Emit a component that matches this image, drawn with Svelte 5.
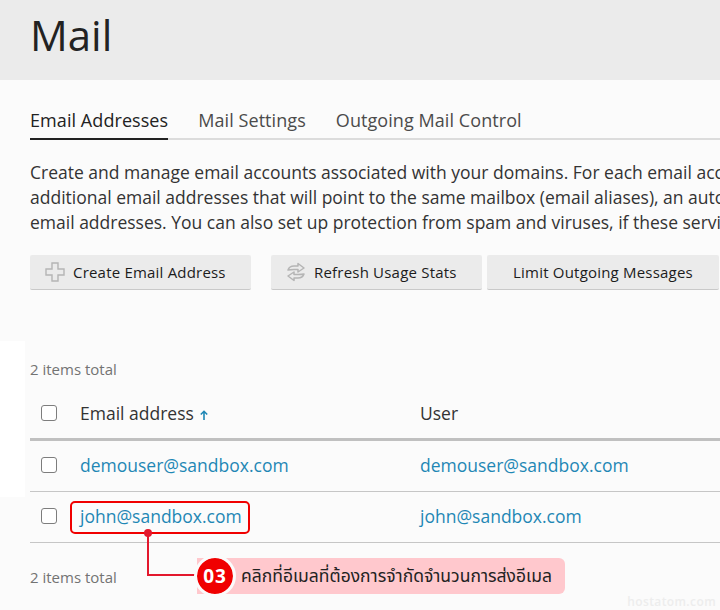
<script>
  const rows = [
    { email: 'demouser@sandbox.com', user: 'demouser@sandbox.com' },
    { email: 'john@sandbox.com', user: 'john@sandbox.com' }
  ];
</script>

<div class="page">
  <div class="strip"></div>
  <header class="head"><h1>Mail</h1></header>
  <main class="content">
    <nav class="tabs">
      <span class="tab active">Email Addresses</span>
      <span class="tab">Mail Settings</span>
      <span class="tab">Outgoing Mail Control</span>
    </nav>
    <p class="intro">
      Create and manage email accounts associated with your domains. For each email account, you can set up<br />
      additional email addresses that will point to the same mailbox (email aliases), an auto-reply, and mail forwarding<br />
      email addresses. You can also set up protection from spam and viruses, if these services are available.
    </p>
    <div class="toolbar">
      <button class="btn first">
        <svg width="20" height="20" viewBox="0 0 20 20" fill="none" stroke="#b5b5b5" stroke-width="1.4"><path d="M7 1h6v6h6v6h-6v6H7v-6H1V7h6z" /></svg>
        Create Email Address
      </button>
      <button class="btn second">
        <svg width="20" height="20" viewBox="0 0 20 20" fill="none" stroke="#b5b5b5" stroke-width="1.5" stroke-linejoin="round"><path d="M2 8c1-3 3-4 6-4h4V1.500L18 6l-6 4V7.500H8c-2 0-4 0-6 .5z" /><path d="M18 12c-1 3-3 4-6 4H8v2.500L2 14l6-4v2.500h4c2 0 4 0 6-.5z" /></svg>
        Refresh Usage Stats
      </button>
      <button class="btn third">Limit Outgoing Messages</button>
    </div>
    <div class="count top">2 items total</div>
    <div class="table">
      <div class="row header">
        <span class="box"></span>
        <span class="col">Email address <svg class="arrow" width="10" height="10" viewBox="0 0 10 10" fill="none" stroke="#1f87b5" stroke-width="1.6"><path d="M5 10V1.500M1.800 4.500 5 1.300l3.200 3.200" /></svg></span>
        <span class="col">User</span>
      </div>
      {#each rows as r}
        <div class="row">
          <span class="box"></span>
          <span class="col link">{r.email}</span>
          <span class="col link">{r.user}</span>
        </div>
      {/each}
    </div>
    <div class="count bottom">2 items total</div>
  </main>

  <div class="highlight"></div>
  <div class="dot"></div>
  <div class="leader"></div>
  <div class="callout">
    <span class="badge">03</span>
    <span class="note">คลิกที่อีเมลที่ต้องการจำกัดจำนวนการส่งอีเมล</span>
  </div>
  <div class="mark">hostatom.com</div>
</div>

<style>
  :global(body) {
    margin: 0;
    background: #fbfbfb;
  }
  .page {
    position: relative;
    width: 720px;
    height: 610px;
    overflow: hidden;
    background: #fbfbfb;
    color: #222;
    font-family: "Open Sans", "Noto Sans", sans-serif;
  }
  .strip {
    position: absolute;
    left: 0;
    top: 341px;
    width: 25px;
    height: 156px;
    background: #fff;
  }
  .head {
    height: 80px;
    background: #ebebeb;
    padding-left: 30px;
    box-sizing: border-box;
  }
  h1 {
    margin: 0;
    font-size: 42px;
    font-weight: 500;
    line-height: 70px;
    color: #222;
  }
  .content {
    position: relative;
    padding: 27px 0 0 30px;
    white-space: nowrap;
  }
  .tabs {
    display: flex;
    gap: 30px;
    height: 31px;
    border-bottom: 2px solid #dcdcdc;
    width: 690px;
  }
  .tab {
    font-size: 18px;
    line-height: 27px;
    font-weight: 500;
    letter-spacing: 0.07px;
    color: #4b4b4b;
    height: 31px;
  }
  .tab.active {
    color: #222;
    border-bottom: 2px solid #222;
  }
  .intro {
    margin: 20px 0 0;
    font-size: 17.5px;
    line-height: 25px;
    color: #333;
  }
  .toolbar {
    display: flex;
    margin-top: 20px;
  }
  .btn {
    display: flex;
    align-items: center;
    gap: 8px;
    height: 35px;
    padding: 0 0 0 15px;
    border: 0;
    border-bottom: 1px solid #c9c9c9;
    border-radius: 2px;
    background: #ebebeb;
    color: #1c1c1c;
    font: 500 15px "Open Sans", sans-serif;
    letter-spacing: 0.2px;
    white-space: nowrap;
    flex: none;
  }
  .first { width: 221px; margin-right: 20px; }
  .second { width: 211px; margin-right: 5px; }
  .third { width: 232px; padding: 0; justify-content: center; }
  .count {
    font-size: 15px;
    line-height: 20px;
    color: #737373;
  }
  .count.top { margin-top: 69px; }
  .count.bottom { margin-top: 24px; }
  .table {
    margin-top: 9px;
    width: 700px;
  }
  .row {
    display: flex;
    align-items: center;
    height: 51px;
    padding-bottom: 2px;
    box-sizing: border-box;
    border-bottom: 1px solid #c6c6c6;
    font-size: 17.5px;
  }
  .row.header {
    height: 53px;
    padding-bottom: 0;
    border-bottom: 3px solid #c0c0c0;
    color: #333;
  }
  .box {
    width: 14px;
    height: 14px;
    margin-left: 11px;
    border: 1.5px solid #7d7d7d;
    border-radius: 3px;
    background: #fff;
    flex: none;
  }
  .col {
    flex: none;
    width: 340px;
    box-sizing: border-box;
  }
  .box + .col {
    margin-left: 23px;
  }
  .link { color: #1f87b5; }
  .arrow {
    margin-left: 1px;
  }
  .highlight {
    position: absolute;
    left: 70px;
    top: 501px;
    width: 176px;
    height: 29px;
    border: 2px solid #f00000;
    border-radius: 5px;
  }
  .dot {
    position: absolute;
    left: 144px;
    top: 529px;
    width: 8px;
    height: 8px;
    border-radius: 50%;
    background: #e3182d;
  }
  .leader {
    position: absolute;
    left: 147px;
    top: 533px;
    width: 55px;
    height: 41px;
    border-left: 2px solid #e3182d;
    border-bottom: 2px solid #e3182d;
  }
  .callout {
    position: absolute;
    left: 197px;
    top: 558px;
    display: flex;
    align-items: center;
    height: 36px;
    width: 368px;
    background: #ffc8cd;
    border-radius: 0 6px 6px 0;
  }
  .badge {
    flex: none;
    width: 36px;
    height: 36px;
    border-radius: 50%;
    background: #f00000;
    color: #fff;
    font-size: 19px;
    font-weight: 700;
    letter-spacing: 0.8px;
    line-height: 36px;
    text-align: center;
    outline: 3px solid #fbfbfb;
  }
  .note {
    margin-left: 8px;
    font-size: 17.5px;
    color: #222;
    font-family: "Noto Sans Thai", "Liberation Sans", "DejaVu Sans", sans-serif;
    white-space: nowrap;
  }
  .mark {
    position: absolute;
    right: 4px;
    bottom: 0;
    font-size: 12px;
    font-weight: 600;
    letter-spacing: 0.4px;
    color: #ededed;
  }
</style>
